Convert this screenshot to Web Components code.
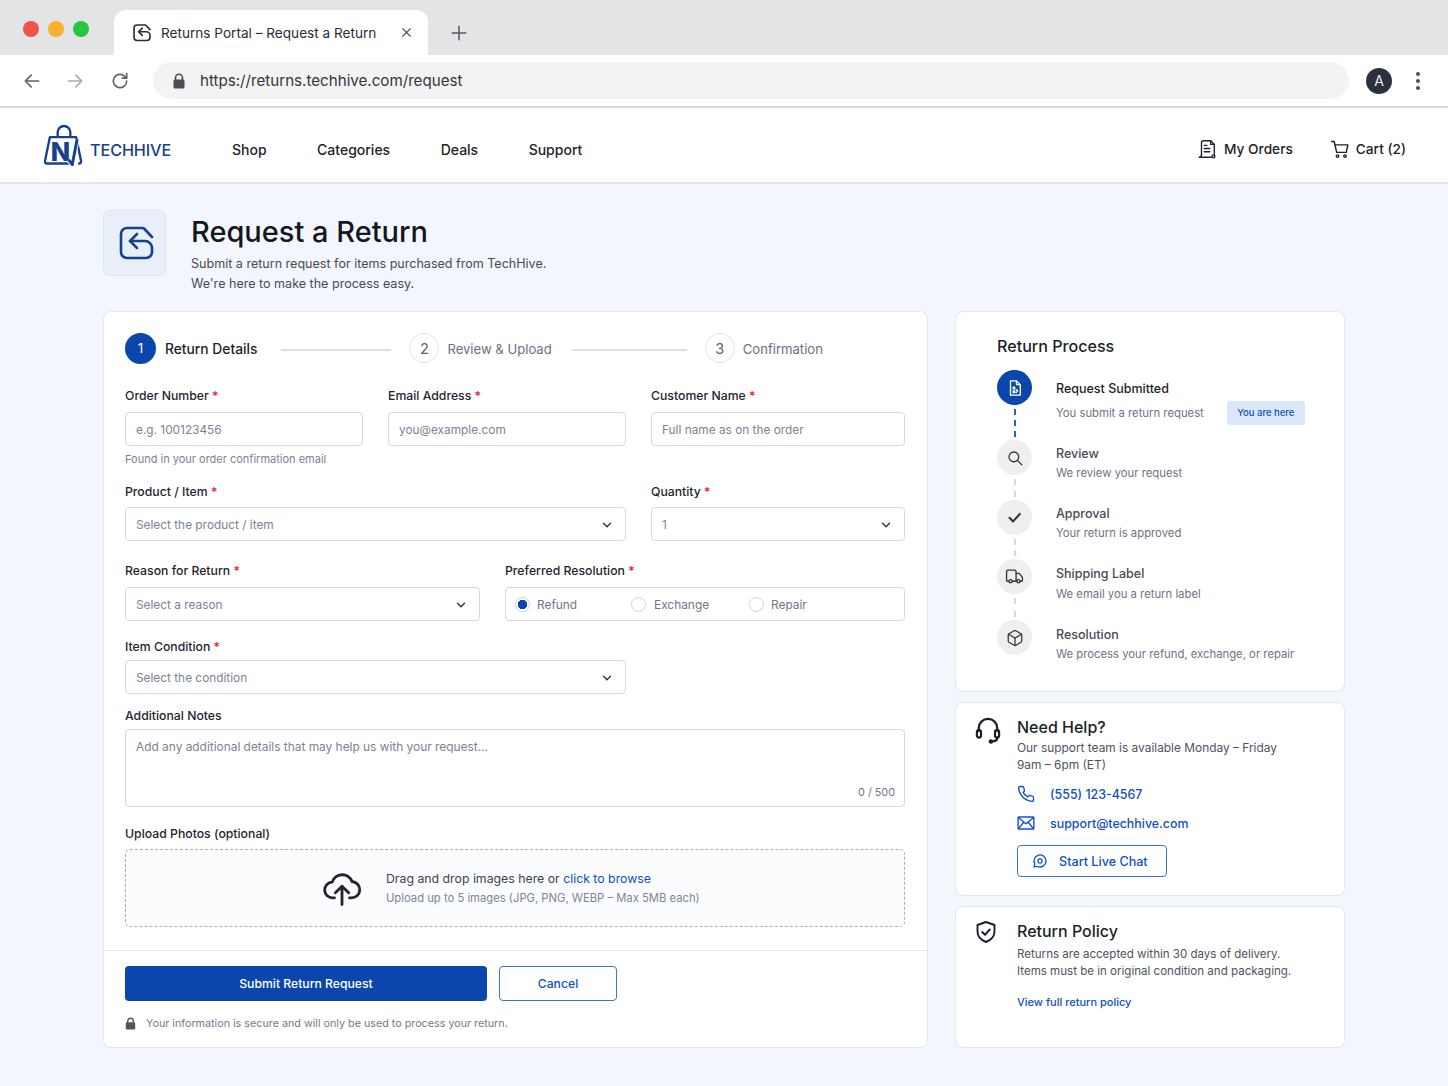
<!DOCTYPE html>
<html lang="en">
<head>
<meta charset="utf-8">
<title>Returns Portal – Request a Return</title>
<style>
  html, body { margin: 0; background: #f3f6fc; }
  body { font-family: Inter, "Liberation Sans", sans-serif; color: #1b1f29; height: 1086px; overflow: hidden; }
</style>
</head>
<body>
<browser-chrome title-text="Returns Portal – Request a Return" url="https://returns.techhive.com/request"></browser-chrome>
<site-header></site-header>
<return-page></return-page>

<script>
const ICONS = {
  ret: '<path d="M33 11 24.500 2H8a6 6 0 0 0-6 6v18a6 6 0 0 0 6 6h19a6 6 0 0 0 6-6v-4a7 7 0 0 0-7-7H11"/><path d="M18 8l-7 7 7 7"/>',
  back: '<path d="M20 12H4M11 5l-7 7 7 7"/>',
  forward: '<path d="M4 12h16M13 5l7 7-7 7"/>',
  reload: '<path d="M20 12a8 8 0 1 1-2.600-5.900L20 8.500"/><path d="M20 3v5.500h-5.500"/>',
  orders: '<path d="M6 18V5a2 2 0 0 1 2-2h8l4 4v11.500"/><path d="M16 3v4h4"/><path d="M9 8h3M9 11.500h6M9 15h6"/><path d="M6 18c0 2-1 3-2.500 3H16.500"/><circle cx="19" cy="20" r="1.600"/>',
  cart: '<path d="M2 3h3l3 13h11.500l2-9H6"/><circle cx="9" cy="20.500" r="1.500"/><circle cx="18" cy="20.500" r="1.500"/>',
  doc: '<path d="M6 2.500h8l5 5v14H6z"/><path d="M14 2.500v5h5"/><path d="M9.500 11h2v2h-2zM9.500 16h2v2h-2zM13.500 14l2 2-2 2"/>',
  search: '<circle cx="10.500" cy="10.500" r="6.500"/><path d="M15.500 15.500 21 21"/>',
  check: '<path d="M5 12.500l5 5L19.500 7"/>',
  truck: '<path d="M14 18V6a2 2 0 0 0-2-2H4a2 2 0 0 0-2 2v11a1 1 0 0 0 1 1h2"/><path d="M15 18H9"/><path d="M19 18h2a1 1 0 0 0 1-1v-3.650a1 1 0 0 0-.220-.620l-3.480-4.350A1 1 0 0 0 17.520 8H14"/><circle cx="17" cy="18" r="2"/><circle cx="7" cy="18" r="2"/>',
  box: '<path d="M21 8a2 2 0 0 0-1-1.730l-7-4a2 2 0 0 0-2 0l-7 4A2 2 0 0 0 3 8v8a2 2 0 0 0 1 1.730l7 4a2 2 0 0 0 2 0l7-4A2 2 0 0 0 21 16Z"/><path d="m3.300 7 8.700 5 8.700-5"/><path d="M12 22V12"/>',
  headset: '<path d="M4 13v-2.500a8 8 0 0 1 16 0V13"/><rect x="2.500" y="12" width="3.500" height="6.500" rx="1.700"/><rect x="18" y="12" width="3.500" height="6.500" rx="1.700"/><path d="M20 18.500c0 2.300-2 3.300-4.500 3.300"/><circle cx="14.500" cy="21.800" r="1"/>',
  phone: '<path d="M22 16.920v3a2 2 0 0 1-2.180 2 19.790 19.790 0 0 1-8.630-3.070 19.500 19.500 0 0 1-6-6 19.790 19.790 0 0 1-3.070-8.670A2 2 0 0 1 4.110 2h3a2 2 0 0 1 2 1.720 12.840 12.840 0 0 0 .7 2.810 2 2 0 0 1-.45 2.110L8.090 9.910a16 16 0 0 0 6 6l1.270-1.270a2 2 0 0 1 2.110-.45 12.840 12.840 0 0 0 2.810.7A2 2 0 0 1 22 16.920z"/>',
  mail: '<rect x="1.500" y="4" width="21" height="16" rx="1"/><path d="M2 5l10 8 10-8M2 19.500l7-8.500M22 19.500 15 11"/>',
  chat: '<path d="M21 12a9 9 0 0 1-13.300 7.900L3 21l1.300-4.500A9 9 0 1 1 21 12z"/><circle cx="12" cy="12" r="3.200"/>',
  shield: '<path d="M12 2l8.500 3v6.500c0 5-3.500 8.500-8.500 10.500-5-2-8.500-5.500-8.500-10.500V5z"/><path d="M8.200 12l2.800 2.800 4.800-5.300"/>',
  cloud: '<path d="M7.500 18.500H6.500a4.700 4.700 0 0 1-.4-9.400A6.300 6.300 0 0 1 18 8.700a4.900 4.900 0 0 1-.5 9.800h-1"/><path d="M12 22.500V11.500M8 15.500l4-4 4 4"/>',
  chevron: '<path d="M6 9l6 6 6-6"/>',
  close: '<path d="M5 5l14 14M19 5 5 19"/>',
  plus: '<path d="M12 3v18M3 12h18"/>'
};

// viewBox is 24 for everything except the return arrow, which was traced at 34
class UiIcon extends HTMLElement {
  connectedCallback() {
    const name = this.getAttribute('name');
    const size = this.getAttribute('size') || 20;
    const sw = this.getAttribute('stroke') || 2;
    const box = name === 'ret' ? 35 : 24;
    this.attachShadow({ mode: 'open' }).innerHTML = `
      <style>
        :host { display: inline-flex; flex: none; width: ${size}px; height: ${size}px; }
        svg { width: 100%; height: 100%; display: block; fill: none; stroke: currentColor; stroke-width: ${sw}; stroke-linecap: round; stroke-linejoin: round; }
      </style>
      <svg viewBox="0 0 ${box} ${box}">${ICONS[name]}</svg>`;
  }
}
customElements.define('ui-icon', UiIcon);

class BrowserChrome extends HTMLElement {
  connectedCallback() {
    this.attachShadow({ mode: 'open' }).innerHTML = `
      <style>
        :host { display: block; font-family: Inter, "Liberation Sans", sans-serif; }
        .strip { height: 55px; background: #e3e4e6; display: flex; align-items: flex-end; box-sizing: border-box; padding-left: 23px; }
        .lights { display: flex; gap: 9px; align-self: flex-start; margin-top: 21px; width: 91px; }
        .lights i { width: 16px; height: 16px; border-radius: 50%; }
        .tab { width: 314px; height: 45px; background: #fff; border-radius: 12px 12px 0 0; display: flex; align-items: center; box-sizing: border-box; padding: 0 15px 0 19px; color: #2a2d34; font-size: 13.600px; }
        .tab span { margin-left: 10px; flex: 1; white-space: nowrap; }
        .plus { margin: 0 0 13px 22px; color: #55585f; height: 18px; }
        .bar { height: 51px; background: #fff; border-bottom: 2px solid #d6d7db; display: flex; align-items: center; box-sizing: content-box; padding-left: 22px; color: #5f636b; }
        .bar .forward { margin-left: 23px; color: #a6a9b0; }
        .bar .reload { margin-left: 25px; }
        .omni { margin-left: 23px; width: 1196px; height: 37px; border-radius: 19px; background: #f3f3f4; display: flex; align-items: center; padding-left: 19px; box-sizing: border-box; color: #33363d; font-size: 15.150px; }
        .omni ui-icon { color: #4a4d55; }
        .omni span { margin-left: 14px; }
        .avatar { margin-left: 17px; width: 26px; height: 26px; border-radius: 50%; background: #2c303a; color: #eee; font-size: 14px; display: flex; align-items: center; justify-content: center; }
        .dots { margin-left: 24px; display: flex; flex-direction: column; gap: 3px; }
        .dots i { width: 4px; height: 4px; border-radius: 50%; background: #4c4f58; }
      </style>
      <div class="strip">
        <div class="lights"><i style="background:#f0524c"></i><i style="background:#fbb030"></i><i style="background:#27c63f"></i></div>
        <div class="tab"><ui-icon name="ret" size="18" stroke="3.200"></ui-icon><span>${this.getAttribute('title-text')}</span><ui-icon name="close" size="13" stroke="2.200" style="color:#55585f"></ui-icon></div>
        <div class="plus"><ui-icon name="plus" size="18" stroke="2"></ui-icon></div>
      </div>
      <div class="bar">
        <ui-icon name="back" size="20"></ui-icon>
        <ui-icon class="forward" name="forward" size="20"></ui-icon>
        <ui-icon class="reload" name="reload" size="20"></ui-icon>
        <div class="omni"><svg width="14" height="16" viewBox="0 0 14 16"><path d="M3.500 7V4.800a3.500 3.500 0 0 1 7 0V7" fill="none" stroke="#4a4d55" stroke-width="1.600"/><rect x="1.500" y="6.500" width="11" height="9" rx="1.500" fill="#4a4d55"/></svg><span>${this.getAttribute('url')}</span></div>
        <div class="avatar">A</div>
        <div class="dots"><i></i><i></i><i></i></div>
      </div>`;
  }
}
customElements.define('browser-chrome', BrowserChrome);

class SiteHeader extends HTMLElement {
  connectedCallback() {
    this.attachShadow({ mode: 'open' }).innerHTML = `
      <style>
        :host { display: block; font-family: Inter, "Liberation Sans", sans-serif; }
        header { height: 74px; box-sizing: content-box; background: #fff; border-bottom: 2px solid #e3e5ea; display: flex; align-items: center; padding: 0 42px 0 44px; color: #1f2229; font-size: 14px; font-weight: 500; }
        .logo { display: flex; align-items: center; width: 188px; }
        .logo b { margin: 10px 0 0 7px; color: #17418c; font-size: 16.200px; font-weight: 500; letter-spacing: -.1px; }
        svg text { font: 800 26px Inter, "Liberation Sans", sans-serif; fill: #17418c; }
        nav { display: flex; gap: 50.500px; margin-top: 8px; }
        .right { margin: 8px 0 0 auto; display: flex; align-items: center; gap: 37px; font-size: 13.700px; }
        .right div { display: flex; align-items: center; gap: 6px; }
      </style>
      <header>
        <div class="logo">
          <svg width="39" height="42" viewBox="0 0 40 42">
            <path d="M14 12V8a6.500 6.500 0 0 1 13 0v4" fill="none" stroke="#17418c" stroke-width="2.400"/>
            <path d="M27 40H3a2 2 0 0 1-2-2.500L6 13H33L38 37.500a2 2 0 0 1-2 2.500h-1" fill="none" stroke="#17418c" stroke-width="2.400" stroke-linejoin="round"/>
            <text x="7" y="37">N</text>
            <path d="M25 36l4 5 5-26" fill="none" stroke="#fff" stroke-width="5"/>
            <path d="M25 36l4 5 5-26" fill="none" stroke="#17418c" stroke-width="3"/>
          </svg>
          <b>TECHHIVE</b>
        </div>
        <nav><span>Shop</span><span>Categories</span><span>Deals</span><span>Support</span></nav>
        <div class="right">
          <div><ui-icon name="orders" size="22" stroke="1.500"></ui-icon>My Orders</div>
          <div><ui-icon name="cart" size="20" stroke="1.700"></ui-icon>Cart (2)</div>
        </div>
      </header>`;
  }
}
customElements.define('site-header', SiteHeader);

class PageTitle extends HTMLElement {
  connectedCallback() {
    this.attachShadow({ mode: 'open' }).innerHTML = `
      <style>
        :host { display: flex; align-items: flex-start; gap: 25px; height: 101px; }
        .icon { box-sizing: content-box; width: 61px; height: 64px; background: #e9eff8; border: 1px solid #dfe6f1; border-radius: 6px; color: #17418c; display: flex; align-items: center; justify-content: center; }
        .icon ui-icon { margin-left: 4px; }
        h1 { margin: 3px 0 3px; font-size: 29px; line-height: 38px; font-weight: 500; color: #14171f; }
        p { margin: 0; font-size: 12.550px; line-height: 20px; color: #464b58; }
      </style>
      <div class="icon"><ui-icon name="ret" size="35" stroke="2.600"></ui-icon></div>
      <div><h1><slot name="title"></slot></h1><p><slot></slot></p></div>`;
  }
}
customElements.define('page-title', PageTitle);

class StepBar extends HTMLElement {
  connectedCallback() {
    this.attachShadow({ mode: 'open' }).innerHTML = `
      <style>
        :host { display: flex; align-items: center; height: 32px; font-size: 13.100px; color: #6a7184; }
        i { font-style: normal; box-sizing: border-box; width: 30px; height: 30px; border: 1px solid #dde2ec; border-radius: 50%; display: flex; align-items: center; justify-content: center; color: #5b6273; font-size: 14.500px; }
        i.on { width: 31px; height: 31px; border: 0; background: #0b46ac; color: #fff; font-size: 13.500px; }
        span { margin: 2px 0 0 8px; white-space: nowrap; }
        span.on { margin-left: 9px; color: #1b1f29; font-weight: 500; font-size: 13.800px; }
        hr { height: 2px; background: #dadfeb; border: 0; margin: 3px 18px 0 22px; }
      </style>
      <i class="on">1</i><span class="on">Return Details</span><hr style="width:110px;margin-left:24px">
      <i>2</i><span>Review &amp; Upload</span><hr style="width:115px;margin-left:20px">
      <i>3</i><span>Confirmation</span>`;
  }
}
customElements.define('step-bar', StepBar);

// label + box; --gap sets the space under the label, it isn't uniform on this form
class FormField extends HTMLElement {
  connectedCallback() {
    const req = this.hasAttribute('required') ? ' <em>*</em>' : '';
    this.attachShadow({ mode: 'open' }).innerHTML = `
      <style>
        :host { display: block; min-width: 0; }
        label { display: block; padding-top: 1px; font-size: 12.250px; line-height: 16px; font-weight: 500; color: #1f2430; margin-bottom: var(--gap, 8px); white-space: nowrap; }
        em { color: #e8232d; font-style: normal; }
        .hint { font-size: 11px; line-height: 14px; color: #7a8297; margin-top: 6px; white-space: nowrap; }
      </style>
      <label>${this.getAttribute('label')}${req}</label>
      <slot></slot>
      ${this.hasAttribute('hint') ? `<div class="hint">${this.getAttribute('hint')}</div>` : ''}`;
  }
}
customElements.define('form-field', FormField);

class TextBox extends HTMLElement {
  connectedCallback() {
    const chevron = this.hasAttribute('select');
    this.attachShadow({ mode: 'open' }).innerHTML = `
      <style>
        :host { display: flex; align-items: center; box-sizing: border-box; height: 34px; background: #fff; border: 1px solid #d5d9e4; border-radius: 4px; padding: 2px 11px 0 10px; font-size: 11.850px; color: #7c8396; white-space: nowrap; }
        span { flex: 1; }
        ui-icon { color: #2d3340; }
      </style>
      <span><slot></slot></span>
      ${chevron ? '<ui-icon name="chevron" size="14" stroke="2.400"></ui-icon>' : ''}`;
  }
}
customElements.define('text-box', TextBox);

class RadioGroup extends HTMLElement {
  connectedCallback() {
    this.attachShadow({ mode: 'open' }).innerHTML = `
      <style>
        :host { display: flex; align-items: center; box-sizing: border-box; height: 34px; background: #fff; border: 1px solid #d5d9e4; border-radius: 4px; padding-left: 9px; font-size: 11.900px; color: #6f7689; }
        div { display: flex; align-items: center; gap: 7px; }
        i { box-sizing: border-box; width: 15px; height: 15px; border-radius: 50%; border: 1px solid #ced3df; background: #fff; }
        i.on { border-color: #c3d3ee; background: radial-gradient(circle, #0b46ac 0 4.500px, #fff 5px); }
      </style>
      <div style="width:116px"><i class="on"></i>Refund</div>
      <div style="width:118px;gap:8px"><i></i>Exchange</div>
      <div><i></i>Repair</div>`;
  }
}
customElements.define('radio-group', RadioGroup);

class NotesBox extends HTMLElement {
  connectedCallback() {
    this.attachShadow({ mode: 'open' }).innerHTML = `
      <style>
        :host { display: flex; flex-direction: column; justify-content: space-between; box-sizing: border-box; height: 78px; background: #fff; border: 1px solid #d5d9e4; border-radius: 4px; padding: 9px 9px 7px 10px; font-size: 11.900px; color: #7c8396; }
        small { align-self: flex-end; font-size: 10.800px; color: #6f7689; }
      </style>
      <span><slot></slot></span><small>0 / 500</small>`;
  }
}
customElements.define('notes-box', NotesBox);

class UploadZone extends HTMLElement {
  connectedCallback() {
    this.attachShadow({ mode: 'open' }).innerHTML = `
      <style>
        :host { display: flex; align-items: center; box-sizing: border-box; height: 78px; border: 1px dashed #a9aeb9; border-radius: 5px; padding-left: 196px; gap: 24px; background: #fbfcfe; }
        ui-icon { color: #23262e; margin-top: -2px; }
        p { margin: 0; font-size: 12.300px; line-height: 18px; color: #3e434f; }
        p + p { font-size: 11.250px; color: #7e8595; margin-top: 1px; }
        a { color: #0f4fc4; }
      </style>
      <ui-icon name="cloud" size="40" stroke="1.700"></ui-icon>
      <div><p>Drag and drop images here or <a>click to browse</a></p><p>Upload up to 5 images (JPG, PNG, WEBP – Max 5MB each)</p></div>`;
  }
}
customElements.define('upload-zone', UploadZone);

class ReturnForm extends HTMLElement {
  connectedCallback() {
    this.attachShadow({ mode: 'open' }).innerHTML = `
      <style>
        :host { display: block; box-sizing: border-box; width: 825px; height: 737px; background: #fff; border: 1px solid #e2e6ef; border-radius: 8px; }
        .body { padding: 20px 22px 0 21px; }
        .row { display: grid; column-gap: 25px; }
        step-bar { margin-bottom: 23px; }
        .foot { border-top: 1px solid #e4e7ee; margin-top: 23px; padding: 15px 22px 0 21px; }
        .btns { display: flex; gap: 12px; }
        button { font: 500 12.200px Inter, "Liberation Sans", sans-serif; height: 35px; border-radius: 4px; }
        .primary { width: 362px; background: #0b46ac; border: 0; color: #fff; }
        .ghost { width: 118px; background: #fff; border: 1.500px solid #3d74d3; color: #0f4fc4; }
        .secure { display: flex; align-items: center; gap: 10px; margin-top: 16px; font-size: 10.760px; color: #737a8c; }
      </style>
      <div class="body">
        <step-bar></step-bar>
        <div class="row" style="grid-template-columns:238px 238px 254px">
          <form-field label="Order Number" required hint="Found in your order confirmation email"><text-box>e.g. 100123456</text-box></form-field>
          <form-field label="Email Address" required><text-box>you@example.com</text-box></form-field>
          <form-field label="Customer Name" required><text-box>Full name as on the order</text-box></form-field>
        </div>
        <div class="row" style="grid-template-columns:501px 254px;margin-top:17px;--gap:7px">
          <form-field label="Product / Item" required><text-box select>Select the product / item</text-box></form-field>
          <form-field label="Quantity" required><text-box select>1</text-box></form-field>
        </div>
        <div class="row" style="grid-template-columns:355px 400px;margin-top:21px">
          <form-field label="Reason for Return" required><text-box select>Select a reason</text-box></form-field>
          <form-field label="Preferred Resolution" required><radio-group></radio-group></form-field>
        </div>
        <div class="row" style="grid-template-columns:501px;margin-top:17px;--gap:5px">
          <form-field label="Item Condition" required><text-box select>Select the condition</text-box></form-field>
        </div>
        <form-field label="Additional Notes" style="margin-top:13px;--gap:5px"><notes-box>Add any additional details that may help us with your request...</notes-box></form-field>
        <form-field label="Upload Photos (optional)" style="margin-top:18px;--gap:7px"><upload-zone></upload-zone></form-field>
      </div>
      <div class="foot">
        <div class="btns"><button class="primary">Submit Return Request</button><button class="ghost">Cancel</button></div>
        <div class="secure">
          <svg width="11" height="13" viewBox="0 0 14 16"><path d="M3.500 7V4.800a3.500 3.500 0 0 1 7 0V7" fill="none" stroke="#4f5563" stroke-width="1.800"/><rect x="1" y="6.500" width="12" height="9" rx="1.500" fill="#4f5563"/></svg>
          Your information is secure and will only be used to process your return.
        </div>
      </div>`;
  }
}
customElements.define('return-form', ReturnForm);

class ProcessStep extends HTMLElement {
  connectedCallback() {
    const active = this.hasAttribute('active');
    const last = this.hasAttribute('last');
    this.attachShadow({ mode: 'open' }).innerHTML = `
      <style>
        :host { display: flex; height: var(--h, 60px); }
        .rail { width: 35px; display: flex; flex-direction: column; align-items: center; margin-right: 24px; }
        .dot { flex: none; width: 35px; height: 35px; border-radius: 50%; display: flex; align-items: center; justify-content: center; background: ${active ? '#0b46ac' : '#efefef'}; color: ${active ? '#fff' : '#33363f'}; }
        .line { flex: 1; margin: 4px 0 3px; border-left: ${active ? '2px dashed #2460cf' : '2px dashed #d9d9dc'}; ${last ? 'display:none;' : ''} }
        .text { padding-top: var(--t, 7px); min-width: 0; flex: 1; }
        b { display: block; font-size: 12.500px; line-height: 16px; font-weight: 500; color: ${active ? '#1b1f29' : '#464b58'}; }
        p { margin: var(--d, 4px) 0 0; font-size: 11.300px; line-height: 15px; color: #6c7387; white-space: nowrap; display: flex; align-items: center; }
        ::slotted(*) { margin-left: 23px; }
      </style>
      <div class="rail"><div class="dot"><ui-icon name="${this.getAttribute('icon')}" size="${this.getAttribute('size') || 18}" stroke="${active ? 1.8 : (this.getAttribute('icon') === 'check' ? 3 : 1.7)}"></ui-icon></div><div class="line"></div></div>
      <div class="text"><b>${this.getAttribute('heading')}</b><p>${this.getAttribute('desc')}<slot></slot></p></div>`;
  }
}
customElements.define('process-step', ProcessStep);

class SideCard extends HTMLElement {
  connectedCallback() {
    this.attachShadow({ mode: 'open' }).innerHTML = `
      <style>
        :host { display: block; box-sizing: border-box; background: #fff; border: 1px solid #e2e6ef; border-radius: 8px; }
        h2 { margin: 0; font-size: 16px; line-height: 22px; font-weight: 500; color: #1b1f29; }
        .wrap { display: flex; }
        .ico { flex: none; width: 43px; }
        p { margin: 1px 0 0; font-size: 11.900px; line-height: 17px; color: #4e535f; white-space: nowrap; }
      </style>
      <div class="wrap" style="padding:${this.getAttribute('pad')}">
        <div class="ico"><ui-icon name="${this.getAttribute('icon')}" size="${this.getAttribute('icon-size')}" stroke="1.900" style="color:#1b1f29"></ui-icon></div>
        <div><h2>${this.getAttribute('heading')}</h2><p><slot name="text"></slot></p><slot></slot></div>
      </div>`;
  }
}
customElements.define('side-card', SideCard);

class ContactLink extends HTMLElement {
  connectedCallback() {
    this.attachShadow({ mode: 'open' }).innerHTML = `
      <style>
        :host { display: flex; align-items: center; gap: 15px; height: 18px; font-size: 12.400px; font-weight: 500; color: #0f4fc4; }
      </style>
      <ui-icon name="${this.getAttribute('icon')}" size="18" stroke="1.800"></ui-icon><slot></slot>`;
  }
}
customElements.define('contact-link', ContactLink);

class ReturnPage extends HTMLElement {
  connectedCallback() {
    this.attachShadow({ mode: 'open' }).innerHTML = `
      <style>
        :host { display: block; padding: 26px 103px 0; font-family: Inter, "Liberation Sans", sans-serif; }
        .cols { display: flex; gap: 27px; align-items: flex-start; }
        aside { width: 390px; display: flex; flex-direction: column; gap: 10px; }
        .process { height: 381px; padding: 23px 0 0 41px; box-sizing: border-box; background: #fff; border: 1px solid #e2e6ef; border-radius: 8px; }
        .process h2 { margin: 0 0 13px; font-size: 16.100px; line-height: 22px; font-weight: 500; color: #1b1f29; }
        .pill { font-size: 9.500px; font-weight: 500; color: #0f4fc4; background: #dbe8fb; border-radius: 3px; line-height: 24px; width: 78px; text-align: center; }
        .chat { display: flex; align-items: center; gap: 11px; box-sizing: border-box; width: 150px; height: 32px; margin-top: 13px; padding-left: 14px; border: 1.500px solid #3d74d3; border-radius: 4px; font-size: 12.600px; font-weight: 500; color: #0f4fc4; }
        contact-link { margin-top: 11px; }
        .policy { display: block; margin-top: 14px; font-size: 11px; font-weight: 500; color: #0f4fc4; line-height: 16px; }
        .lead { display: block; margin-top: 4px; font-size: 11.550px; }
      </style>
      <page-title><span slot="title">Request a Return</span>Submit a return request for items purchased from TechHive.<br>We're here to make the process easy.</page-title>
      <div class="cols">
        <return-form></return-form>
        <aside>
          <div class="process">
            <h2>Return Process</h2>
            <process-step active icon="doc" heading="Request Submitted" desc="You submit a return request" style="--h:70px;--t:11px;--d:4px"><span class="pill">You are here</span></process-step>
            <process-step icon="search" heading="Review" desc="We review your request" style="--t:6px"></process-step>
            <process-step icon="check" size="17" heading="Approval" desc="Your return is approved" style="--h:59px;--t:6px;--d:4px"></process-step>
            <process-step icon="truck" size="19" heading="Shipping Label" desc="We email you a return label" style="--h:61px;--d:5px"></process-step>
            <process-step last icon="box" heading="Resolution" desc="We process your refund, exchange, or repair"></process-step>
          </div>
          <side-card icon="headset" icon-size="28" heading="Need Help?" pad="13px 0 0 18px" style="height:194px">
            <span slot="text">Our support team is available Monday – Friday<br>9am – 6pm (ET)</span>
            <contact-link icon="phone" style="margin-top:12px">(555) 123-4567</contact-link>
            <contact-link icon="mail">support@techhive.com</contact-link>
            <div class="chat"><ui-icon name="chat" size="16" stroke="1.900"></ui-icon>Start Live Chat</div>
          </side-card>
          <side-card icon="shield" icon-size="24" heading="Return Policy" pad="13px 0 0 18px" style="height:142px">
            <span slot="text" class="lead">Returns are accepted within 30 days of delivery.<br>Items must be in original condition and packaging.</span>
            <a class="policy">View full return policy</a>
          </side-card>
        </aside>
      </div>`;
  }
}
customElements.define('return-page', ReturnPage);
</script>
</body>
</html>
